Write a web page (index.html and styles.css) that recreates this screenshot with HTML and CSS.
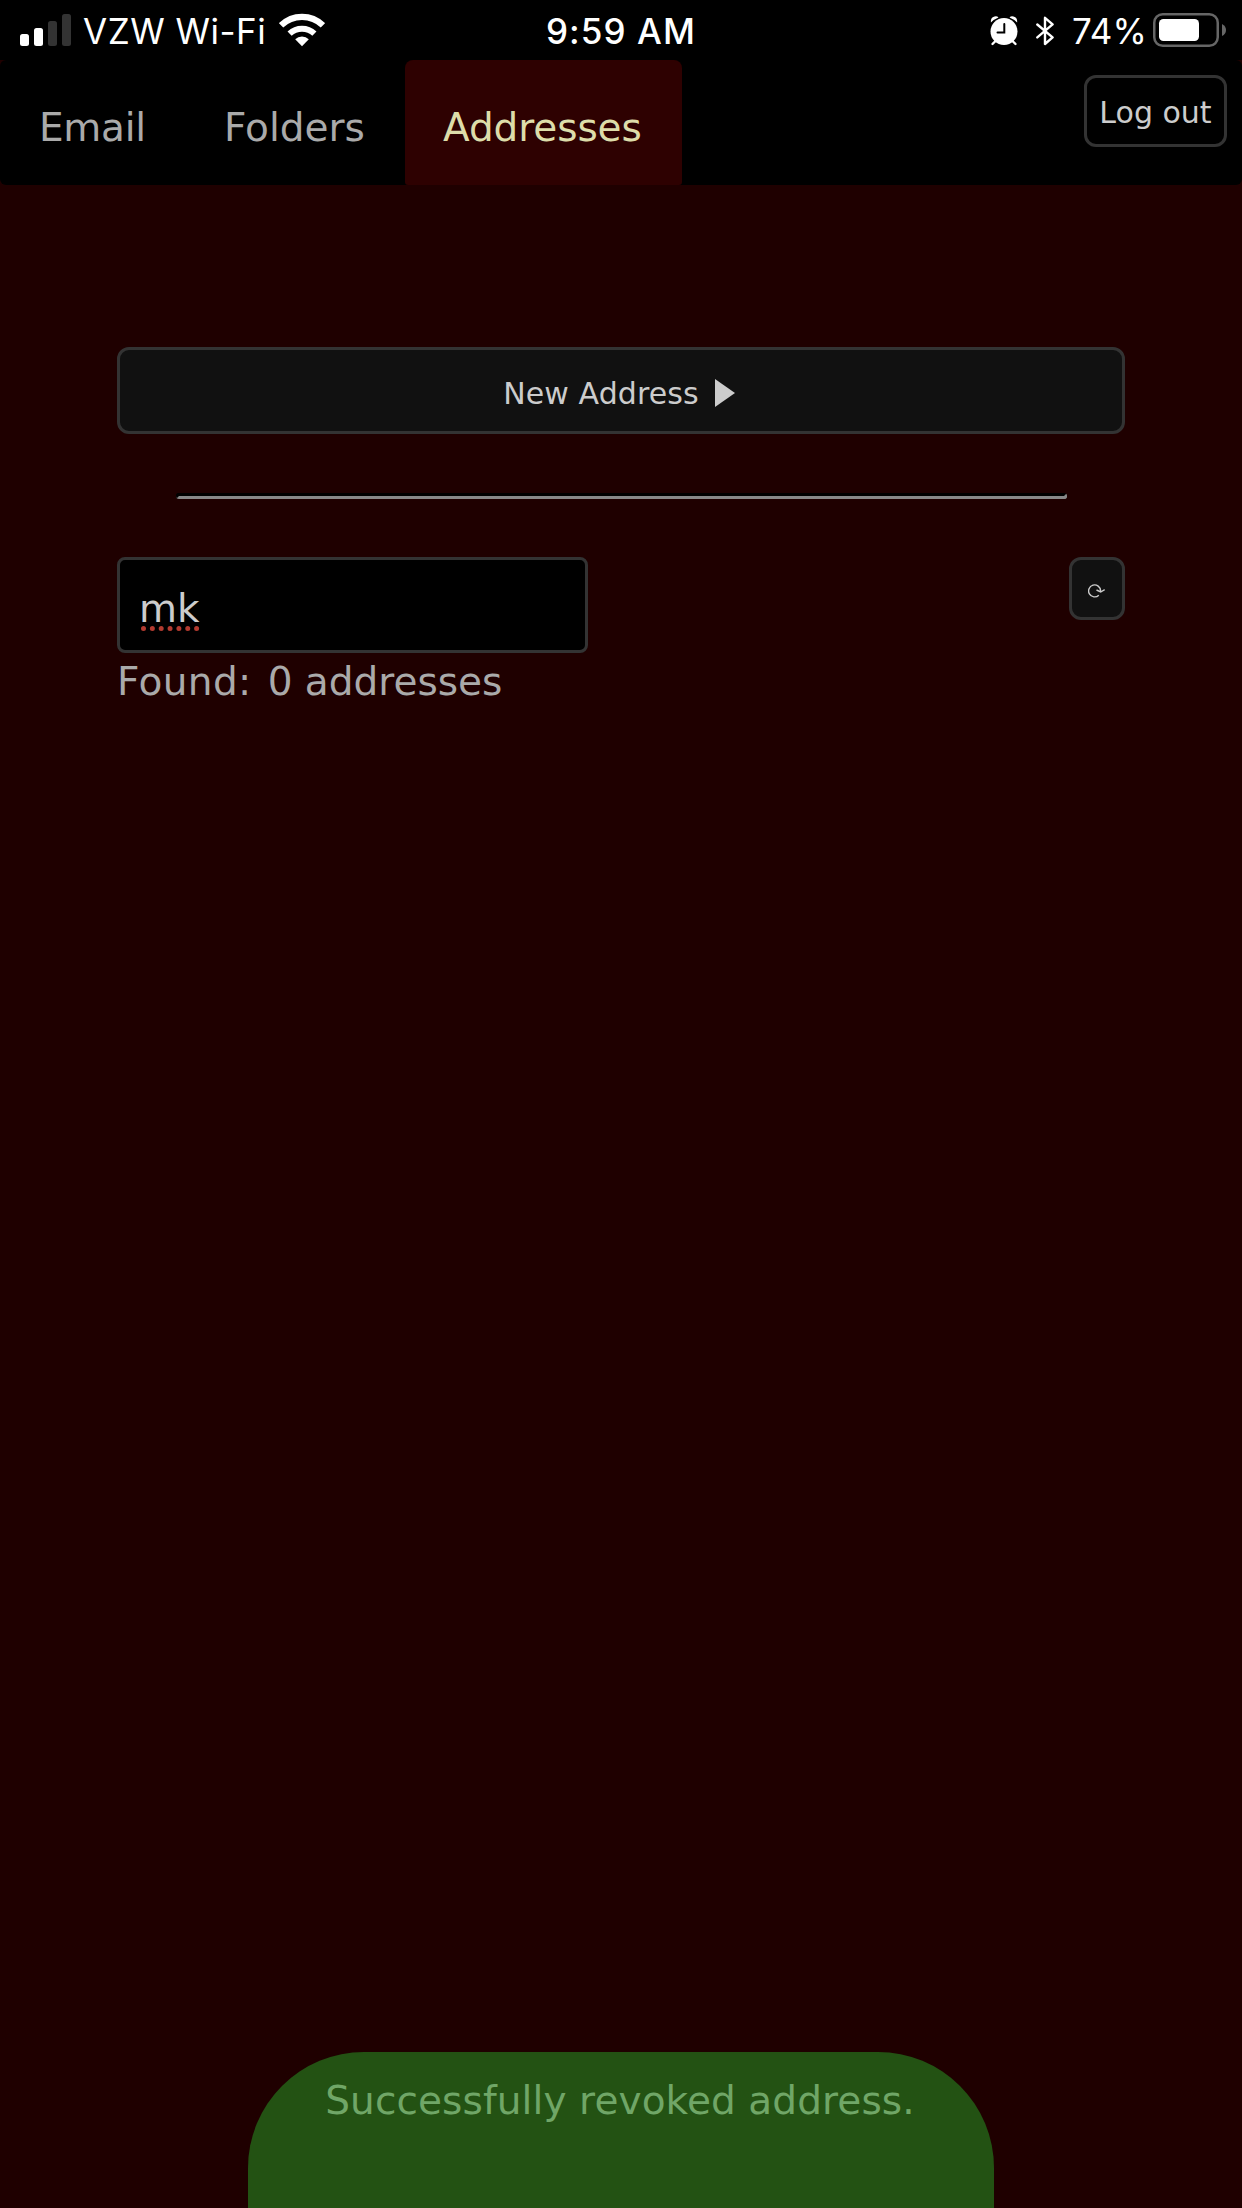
FILE: index.html
```html
<!DOCTYPE html>
<html lang="en">
<head>
<meta charset="utf-8">
<title>Addresses</title>
<link rel="stylesheet" href="styles.css">
</head>
<body>
<div class="status">
  <div class="status-left">
    <svg class="signal" width="51" height="32" viewBox="0 0 51 32" fill="#fff"><rect y="20" width="9" height="12" rx="2.5"/><rect x="14" y="14" width="9" height="18" rx="2.5"/><rect x="28" y="7" width="9" height="25" rx="2.5" fill="#333"/><rect x="42" width="9" height="32" rx="2.5" fill="#333"/></svg>
    <span class="carrier">VZW Wi-Fi</span>
    <svg class="wifi" width="46" height="34" viewBox="0 0 46 34" fill="none" stroke="#fff"><path d="M2.1 12.3a30 30 0 0 1 41.8 0" stroke-width="6.2"/><path d="M10.6 20.7a18 18 0 0 1 24.8 0" stroke-width="6"/><path d="M16.2 26.3a9.8 9.8 0 0 1 13.6 0L23 33.2z" fill="#fff" stroke="none"/></svg>
  </div>
  <div class="clock">9:59 AM</div>
  <div class="status-right">
    <svg class="alarm" width="28" height="30" viewBox="0 0 28 30" fill="#fff"><circle cx="14" cy="15.500" r="13.500"/><path d="M.9 6.4Q.3 1.500 4.500.5 7.200 0 8.500 1.400 4 3.200.9 6.400zM27.100 6.400Q27.700 1.500 23.500.5 20.800 0 19.500 1.400 24 3.200 27.100 6.400z"/><path d="M5.500 25 2.500 28M22.500 25l3 3" stroke="#fff" stroke-width="2.400" stroke-linecap="round"/><path d="M14.300 8v8.500H7.500" fill="none" stroke="#000" stroke-width="2" stroke-linecap="round"/></svg>
    <svg class="bluetooth" width="18" height="30" viewBox="0 0 18 30" fill="none" stroke="#fff" stroke-width="2.400" stroke-linejoin="round" stroke-linecap="round"><path d="M1.300 8.500 16.600 21.400 9 28V1.800l7.600 6.600L1.300 21.400"/></svg>
    <span class="percent">74%</span>
    <svg class="battery" width="73" height="34" viewBox="0 0 73 34"><rect x="1.250" y="1.250" width="63.500" height="31.500" rx="8.500" fill="none" stroke="#666" stroke-width="2.500"/><rect x="6" y="6" width="40" height="22" rx="4.500" fill="#fff"/><path d="M69 11q4 2 4 6t-4 6z" fill="#666"/></svg>
  </div>
</div>
<div class="page">
  <nav class="nav">
    <a class="tab email">Email</a>
    <a class="tab folders">Folders</a>
    <a class="tab active">Addresses</a>
    <button class="logout">Log out</button>
  </nav>
  <main class="content">
    <button class="new-address"><span>New Address</span><svg width="20" height="28" viewBox="0 0 20 28"><path d="M0 0l20 14L0 28z" fill="#ccc"/></svg></button>
    <hr class="divider">
    <div class="search-row">
      <div class="search"><span class="query">mk<svg class="misspelled" width="60" height="5" viewBox="0 0 60 5"><path d="M2.500 2.500h53.500" stroke="#b33b30" stroke-width="5" stroke-linecap="round" stroke-dasharray="0 8.850"/></svg></span></div>
      <button class="refresh"><svg width="17" height="14" viewBox="0 0 17 14" fill="none" stroke="#ccc" stroke-width="1.400"><path d="M10.800 11.200a6 6 0 1 1 1.800-4.400v.8M8.500 6l4.200 2 4-2.300"/></svg></button>
    </div>
    <p class="found"><span class="label">Found</span><span class="colon">:</span> 0 addresses</p>
  </main>
  <div class="toast">Successfully revoked address.</div>
</div>
</body>
</html>
```
FILE: styles.css
```css
* { box-sizing: border-box; }
body {
  margin: 0;
  width: 1242px;
  height: 2208px;
  overflow: hidden;
  display: flex;
  flex-direction: column;
  background: #1f0000;
  color: #aaa;
  font: 39px/47px Verdana, "DejaVu Sans", sans-serif;
}
svg { display: block; flex: none; }
button {
  margin: 0;
  padding: 0;
  display: flex;
  align-items: center;
  justify-content: center;
  border: 3px solid #333;
  border-radius: 12px;
  background: #111;
  color: #ccc;
  font: 30px/36px Verdana, "DejaVu Sans", sans-serif;
}
.status {
  flex: none;
  height: 60px;
  display: grid;
  grid-template-columns: 1fr auto 1fr;
  background: #000;
  color: #fff;
  font: 35px/60px Inter, sans-serif;
  white-space: nowrap;
}
.status-left, .status-right { display: flex; align-items: flex-start; }
.status-left { padding-left: 20px; }
.status-right { justify-content: flex-end; padding-right: 16px; }
.carrier, .clock, .percent { padding-top: 1px; height: 60px; }
.signal { margin-top: 14px; }
.carrier { width: 195px; padding-left: 12px; letter-spacing: 0.5px; }
.wifi { margin: 13px 0 0 13px; }
.clock { font-weight: 500; letter-spacing: 1.1px; }
.alarm { margin: 16px 18px 0 0; }
.bluetooth { margin: 16px 17px 0 0; }
.percent { width: 82px; padding-left: 1px; }
.battery { margin-top: 13px; }
.page { flex: 1; display: flex; flex-direction: column; }
.nav {
  height: 125px;
  display: flex;
  background: #000;
  border-radius: 6px;
}
.tab {
  height: 125px;
  padding-top: 44px;
  padding-left: 39px;
  white-space: nowrap;
}
.email { width: 185px; letter-spacing: -0.3px; }
.folders { width: 220px; }
.active {
  width: 277px;
  padding-left: 38px;
  letter-spacing: -0.1px;
  border-radius: 8px 8px 3px 3px;
  background: #2e0101;
  color: #ddddaa;
}
.logout {
  width: 143px;
  height: 72px;
  margin: 15px 15px 0 auto;
  background: #000;
  padding-top: 3px;
}
.content { padding: 162px 117px 0; }
.new-address {
  width: 1008px;
  height: 87px;
  gap: 16px;
  padding: 6px 4px 0 0;
  letter-spacing: 0.1px;
}
.new-address svg { margin-top: -2px; }
.divider {
  width: 891px;
  height: 6px;
  margin: 59px 0 58px 59px;
  border: 3px solid #000;
  border-right-color: #888;
  border-bottom-color: #888;
  border-radius: 3px;
}
.search-row { display: flex; justify-content: space-between; align-items: flex-start; }
.search {
  width: 471px;
  height: 96px;
  padding: 25px 19px 0;
  border: 3px solid #333;
  border-radius: 8px;
  background: #000;
  color: #ccc;
}
.query { position: relative; display: inline-block; }
.misspelled { position: absolute; left: 2px; top: 41px; }
.refresh { width: 56px; height: 63px; padding: 5px 2px 0 0; }
.found { margin: 5px 0 0; white-space: nowrap; }
.label { letter-spacing: 0.4px; }
.colon { letter-spacing: 4px; }
.toast {
  width: 746px;
  height: 156px;
  margin: auto auto 0;
  padding-top: 25px;
  padding-right: 2px;
  border-radius: 116px 116px 0 0;
  background: #235213;
  color: #70a667;
  letter-spacing: 0.1px;
  text-align: center;
  white-space: nowrap;
}
```
